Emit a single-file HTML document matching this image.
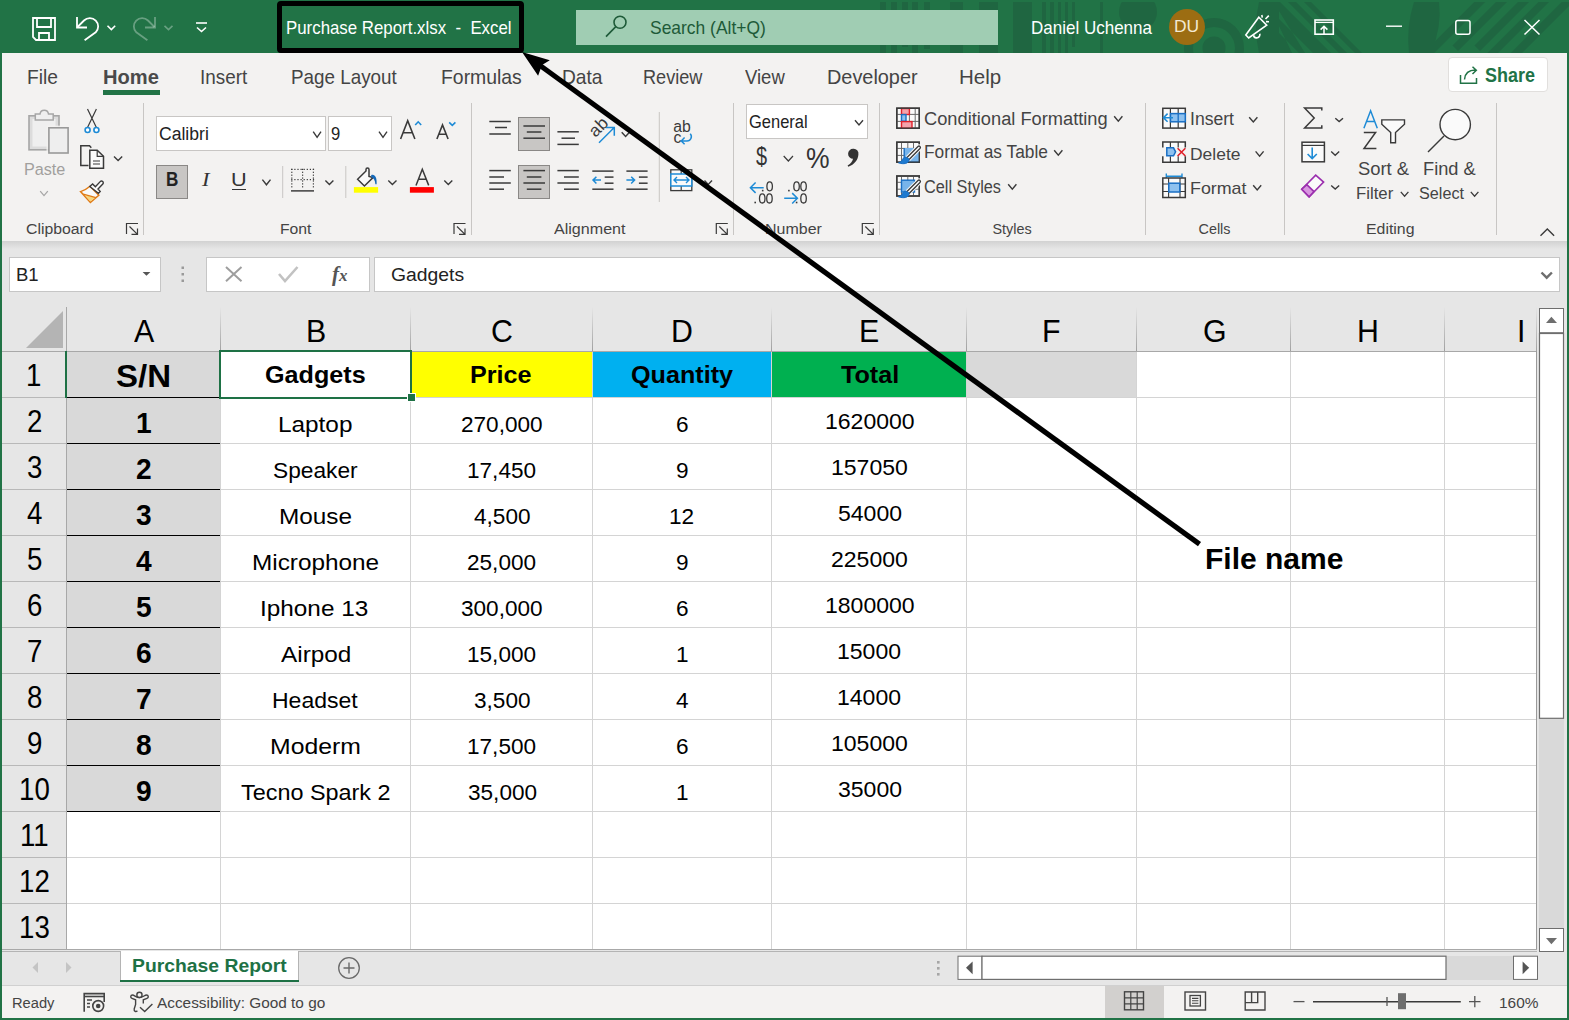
<!DOCTYPE html>
<html><head><meta charset="utf-8"><style>
html,body{margin:0;padding:0;width:1569px;height:1020px;overflow:hidden;background:#fff}
body{position:relative;font-family:'Liberation Sans', sans-serif}
div,svg,span{position:absolute}
.t{white-space:pre;line-height:1;transform-origin:0 0}
</style></head><body>
<div style="left:0px;top:0px;width:1569px;height:53px;background:#217346"></div>
<svg style="left:0;top:0" width="1569" height="53" viewBox="0 0 1569 53">
<defs><clipPath id="tb"><rect x="0" y="2" width="1569" height="51"/></clipPath></defs>
<g fill="#1f6641" clip-path="url(#tb)">
<rect x="880" y="2" width="6" height="51"/><rect x="891" y="2" width="6" height="51"/><rect x="902" y="2" width="6" height="45"/><rect x="912" y="2" width="6" height="51"/><rect x="924" y="2" width="6" height="47"/>
<rect x="950" y="2" width="13" height="51"/><rect x="979" y="2" width="19" height="51"/>
<rect x="1013" y="2" width="19" height="51"/>
<rect x="1042" y="2" width="4" height="51"/><rect x="1050" y="2" width="4" height="51"/><rect x="1058" y="2" width="3" height="51"/><rect x="1065" y="2" width="3" height="51"/><rect x="1072" y="2" width="3" height="45"/><rect x="1100" y="2" width="3" height="51"/>
<circle cx="1138" cy="12" r="19"/>
<path fill-rule="evenodd" d="M1184 48 A30 30 0 1 1 1244 48 A30 30 0 1 1 1184 48 Z M1193 48 A21 21 0 1 0 1235 48 A21 21 0 1 0 1193 48 Z"/>
<circle cx="1214" cy="48" r="11.5"/>
<path d="M1259 2 Q1253 27 1259 53 L1362 53 L1311 2 Z"/>
<path d="M1414 2 Q1406 27 1409 53 L1431 53 Q1442 27 1439 2 Z"/>
</g>
<g fill="#217346" clip-path="url(#tb)">
<path d="M1280 2 L1288 2 L1339 53 L1331 53 Z"/>
<path d="M1296 2 L1304 2 L1355 53 L1347 53 Z"/>
<path d="M1279 11 L1279 19 L1313 53 L1305 53 Z"/>
<path d="M1279 26 L1279 33 L1299 53 L1292 53 Z"/>
</g>
<g fill="#1f6641" clip-path="url(#tb)">
<path d="M1474.3 2 L1485.2 2 L1434.2 53 L1423.3 53 Z"/>
<path d="M1496 2 L1507 2 L1458 51 L1452.5 45.5 Z"/>
<path d="M1518 2 L1529 2 L1480 51 L1474.5 45.5 Z"/>
<path d="M1538.5 2 L1549 2 L1498 53 L1487.5 53 Z"/>
<path d="M1561.8 2 L1569 2 L1569 6 L1522 53 L1510.8 53 Z"/>
</g></svg>
<div style="left:277px;top:1px;width:237px;height:42px;border:5px solid #000;border-radius:4px"></div>
<div style="left:576px;top:10px;width:422px;height:35px;background:#a0cdb3"></div>
<div style="left:2px;top:53px;width:1565px;height:188px;background:#f3f2f1"></div>
<div style="left:2px;top:241px;width:1565px;height:710px;background:#e6e6e6"></div>
<div style="left:2px;top:241px;width:1565px;height:8px;background:linear-gradient(#d2d2d2,#e6e6e6)"></div>
<div style="left:143px;top:103px;width:1px;height:132px;background:#c8c6c4"></div>
<div style="left:471px;top:103px;width:1px;height:132px;background:#c8c6c4"></div>
<div style="left:733px;top:103px;width:1px;height:132px;background:#c8c6c4"></div>
<div style="left:879px;top:103px;width:1px;height:132px;background:#c8c6c4"></div>
<div style="left:1145px;top:103px;width:1px;height:132px;background:#c8c6c4"></div>
<div style="left:1284px;top:103px;width:1px;height:132px;background:#c8c6c4"></div>
<div style="left:1496px;top:103px;width:1px;height:132px;background:#c8c6c4"></div>
<div style="left:1448px;top:57px;width:98px;height:33px;background:#fff;border:1px solid #e1dfdd;border-radius:4px"></div>
<div style="left:156px;top:116px;width:168px;height:33px;background:#fff;border:1px solid #c8c6c4"></div>
<div style="left:328px;top:116px;width:62px;height:33px;background:#fff;border:1px solid #c8c6c4"></div>
<div style="left:746px;top:104px;width:120px;height:33px;background:#fff;border:1px solid #c8c6c4"></div>
<div style="left:9px;top:257px;width:150px;height:33px;background:#fff;border:1px solid #c6c6c6"></div>
<div style="left:206px;top:257px;width:162px;height:33px;background:#fff;border:1px solid #c6c6c6"></div>
<div style="left:374px;top:257px;width:1184px;height:33px;background:#fff;border:1px solid #c6c6c6"></div>
<div style="left:67px;top:352px;width:1469px;height:597px;background:#fff"></div>
<div style="left:66px;top:351px;width:154px;height:460px;background:#d9d9d9"></div>
<div style="left:410px;top:351px;width:182px;height:46px;background:#ffff00"></div>
<div style="left:592px;top:351px;width:179px;height:46px;background:#00b0f0"></div>
<div style="left:771px;top:351px;width:195px;height:46px;background:#00b050"></div>
<div style="left:966px;top:351px;width:170px;height:46px;background:#d9d9d9"></div>
<div style="left:66px;top:397px;width:1470px;height:1px;background:#d4d4d4"></div>
<div style="left:66px;top:443px;width:1470px;height:1px;background:#d4d4d4"></div>
<div style="left:66px;top:489px;width:1470px;height:1px;background:#d4d4d4"></div>
<div style="left:66px;top:535px;width:1470px;height:1px;background:#d4d4d4"></div>
<div style="left:66px;top:581px;width:1470px;height:1px;background:#d4d4d4"></div>
<div style="left:66px;top:627px;width:1470px;height:1px;background:#d4d4d4"></div>
<div style="left:66px;top:673px;width:1470px;height:1px;background:#d4d4d4"></div>
<div style="left:66px;top:719px;width:1470px;height:1px;background:#d4d4d4"></div>
<div style="left:66px;top:765px;width:1470px;height:1px;background:#d4d4d4"></div>
<div style="left:66px;top:811px;width:1470px;height:1px;background:#d4d4d4"></div>
<div style="left:66px;top:857px;width:1470px;height:1px;background:#d4d4d4"></div>
<div style="left:66px;top:903px;width:1470px;height:1px;background:#d4d4d4"></div>
<div style="left:66px;top:949px;width:1470px;height:1px;background:#d4d4d4"></div>
<div style="left:220px;top:351px;width:1px;height:598px;background:#d4d4d4"></div>
<div style="left:410px;top:351px;width:1px;height:598px;background:#d4d4d4"></div>
<div style="left:592px;top:351px;width:1px;height:598px;background:#d4d4d4"></div>
<div style="left:771px;top:351px;width:1px;height:598px;background:#d4d4d4"></div>
<div style="left:966px;top:351px;width:1px;height:598px;background:#d4d4d4"></div>
<div style="left:1136px;top:351px;width:1px;height:598px;background:#d4d4d4"></div>
<div style="left:1290px;top:351px;width:1px;height:598px;background:#d4d4d4"></div>
<div style="left:1444px;top:351px;width:1px;height:598px;background:#d4d4d4"></div>
<div style="left:66px;top:397px;width:154px;height:1px;background:#000"></div>
<div style="left:66px;top:443px;width:154px;height:1px;background:#000"></div>
<div style="left:66px;top:489px;width:154px;height:1px;background:#000"></div>
<div style="left:66px;top:535px;width:154px;height:1px;background:#000"></div>
<div style="left:66px;top:581px;width:154px;height:1px;background:#000"></div>
<div style="left:66px;top:627px;width:154px;height:1px;background:#000"></div>
<div style="left:66px;top:673px;width:154px;height:1px;background:#000"></div>
<div style="left:66px;top:719px;width:154px;height:1px;background:#000"></div>
<div style="left:66px;top:765px;width:154px;height:1px;background:#000"></div>
<div style="left:66px;top:811px;width:154px;height:1px;background:#000"></div>
<div style="left:67px;top:352px;width:153px;height:458px;background:transparent"></div>
<div style="left:220px;top:307px;width:1px;height:44px;background:linear-gradient(#e6e6e6,#a0a0a0)"></div>
<div style="left:410px;top:307px;width:1px;height:44px;background:linear-gradient(#e6e6e6,#a0a0a0)"></div>
<div style="left:592px;top:307px;width:1px;height:44px;background:linear-gradient(#e6e6e6,#a0a0a0)"></div>
<div style="left:771px;top:307px;width:1px;height:44px;background:linear-gradient(#e6e6e6,#a0a0a0)"></div>
<div style="left:966px;top:307px;width:1px;height:44px;background:linear-gradient(#e6e6e6,#a0a0a0)"></div>
<div style="left:1136px;top:307px;width:1px;height:44px;background:linear-gradient(#e6e6e6,#a0a0a0)"></div>
<div style="left:1290px;top:307px;width:1px;height:44px;background:linear-gradient(#e6e6e6,#a0a0a0)"></div>
<div style="left:1444px;top:307px;width:1px;height:44px;background:linear-gradient(#e6e6e6,#a0a0a0)"></div>
<div style="left:1536px;top:307px;width:1px;height:44px;background:linear-gradient(#e6e6e6,#a0a0a0)"></div>
<div style="left:2px;top:351px;width:1535px;height:1px;background:#a8a8a8"></div>
<div style="left:2px;top:397px;width:64px;height:1px;background:#b8b8b8"></div>
<div style="left:2px;top:443px;width:64px;height:1px;background:#b8b8b8"></div>
<div style="left:2px;top:489px;width:64px;height:1px;background:#b8b8b8"></div>
<div style="left:2px;top:535px;width:64px;height:1px;background:#b8b8b8"></div>
<div style="left:2px;top:581px;width:64px;height:1px;background:#b8b8b8"></div>
<div style="left:2px;top:627px;width:64px;height:1px;background:#b8b8b8"></div>
<div style="left:2px;top:673px;width:64px;height:1px;background:#b8b8b8"></div>
<div style="left:2px;top:719px;width:64px;height:1px;background:#b8b8b8"></div>
<div style="left:2px;top:765px;width:64px;height:1px;background:#b8b8b8"></div>
<div style="left:2px;top:811px;width:64px;height:1px;background:#b8b8b8"></div>
<div style="left:2px;top:857px;width:64px;height:1px;background:#b8b8b8"></div>
<div style="left:2px;top:903px;width:64px;height:1px;background:#b8b8b8"></div>
<div style="left:2px;top:949px;width:64px;height:1px;background:#b8b8b8"></div>
<div style="left:66px;top:307px;width:1px;height:642px;background:#a8a8a8"></div>
<div style="left:1536px;top:351px;width:1px;height:599px;background:#9a9a9a"></div>
<div style="left:2px;top:949px;width:1535px;height:1px;background:#a8a8a8"></div>
<svg style="left:26px;top:311px;" width="38" height="38" viewBox="0 0 38 38"><path d="M37 0 L37 37 L0 37 Z" fill="#b4b4b4"/></svg>
<div style="left:219px;top:350px;width:189px;height:45px;border:2px solid #1e7145"></div>
<div style="left:407px;top:393px;width:7px;height:7px;background:#1e7145;border:1px solid #fff"></div>
<div style="left:65px;top:351px;width:2px;height:47px;background:#1e7145"></div>
<div style="left:1537px;top:307px;width:30px;height:645px;background:#e6e6e6"></div>
<div style="left:1539px;top:718px;width:25px;height:211px;background:#d9d9d9"></div>
<div style="left:2px;top:950px;width:1565px;height:35px;background:#e6e6e6"></div>
<div style="left:2px;top:951px;width:118px;height:1px;background:#b4b4b4"></div>
<div style="left:299px;top:951px;width:1238px;height:1px;background:#b4b4b4"></div>
<div style="left:120px;top:951px;width:179px;height:31px;background:#fff;border-left:1px solid #b4b4b4;border-right:1px solid #b4b4b4;box-sizing:border-box"></div>
<div style="left:120px;top:980px;width:179px;height:2px;background:#1e7145"></div>
<div style="left:2px;top:985px;width:1565px;height:33px;background:#f3f2f1"></div>
<div style="left:2px;top:985px;width:1565px;height:1px;background:#d0d0d0"></div>
<div style="left:1105px;top:986px;width:59px;height:32px;background:#d2d0ce"></div>
<div style="left:1446px;top:956px;width:68px;height:24px;background:#d9d9d9"></div>
<div style="left:0px;top:53px;width:2px;height:967px;background:#217346"></div>
<div style="left:1567px;top:53px;width:2px;height:967px;background:#217346"></div>
<div style="left:0px;top:1018px;width:1569px;height:2px;background:#217346"></div>
<svg style="left:0;top:0" width="1569" height="1020" viewBox="0 0 1569 1020"><path d="M33 18 H55 V40 H36 L33 37 Z" stroke="#ffffff" stroke-width="1.8" fill="none" /><path d="M37 18 V27 H51 V18" stroke="#ffffff" stroke-width="1.8" fill="none" /><path d="M39 40 V33 H49 V40" stroke="#ffffff" stroke-width="1.8" fill="none" /><path d="M77 17 V27.5 H87" stroke="#ffffff" stroke-width="1.8" fill="none" /><path d="M77.5 27 L84 20.5 A8.3 8.3 0 0 1 95.7 32.3 L84.6 40.3" stroke="#ffffff" stroke-width="1.8" fill="none" /><path d="M107.5 25.8 L111.35 29.6 L115.2 25.8" stroke="#ffffff" stroke-width="1.6" fill="none" /><path d="M155 17 V27.5 H145" stroke="rgba(255,255,255,0.32)" stroke-width="1.8" fill="none" /><path d="M154.5 27 L148 20.5 A8.3 8.3 0 0 0 136.3 32.3 L147.4 40.3" stroke="rgba(255,255,255,0.32)" stroke-width="1.8" fill="none" /><path d="M164.5 25.8 L168.5 29.6 L172.5 25.8" stroke="rgba(255,255,255,0.32)" stroke-width="1.6" fill="none" /><path d="M196 23 H207" stroke="#ffffff" stroke-width="1.6" fill="none" /><path d="M197 27.5 L201.5 31.5 L206 27.5" stroke="#ffffff" stroke-width="1.6" fill="none" /><circle cx="620" cy="22.2" r="6" stroke="#1e5a38" stroke-width="1.6" fill="none" /><path d="M615.8 26.6 L606 36.6" stroke="#1e5a38" stroke-width="1.6" fill="none" /><path d="M1245.8 35 L1258.8 17.3 L1266.7 25.2 L1248.7 38 Z" stroke="#ffffff" stroke-width="1.6" fill="none" /><path d="M1253.5 35.3 A3.2 3.2 0 0 0 1259.8 33.8" stroke="#ffffff" stroke-width="1.6" fill="none" /><path d="M1261.8 15 L1262.3 17.6 M1265.5 19 L1268.8 15.6 M1266 21.6 L1269 21.7" stroke="#ffffff" stroke-width="1.6" fill="none" /><rect x="1315" y="20" width="18.3" height="14.2" stroke="#ffffff" stroke-width="1.6" fill="none" /><path d="M1315 22.4 H1333.3" stroke="#ffffff" stroke-width="1.3" fill="none" /><path d="M1324 34 V26.5 M1320.6 29.6 L1324 26.2 L1327.4 29.6" stroke="#ffffff" stroke-width="1.5" fill="none" /><path d="M1386 26.2 H1402" stroke="#ffffff" stroke-width="1.4" fill="none" /><rect x="1455.8" y="20.5" width="14.2" height="13.8" stroke="#ffffff" stroke-width="1.5" fill="none" rx="2"/><path d="M1524.5 20 L1539.5 34.5 M1539.5 20 L1524.5 34.5" stroke="#ffffff" stroke-width="1.5" fill="none" /><rect x="29" y="115.8" width="30" height="34" stroke="#a6a6a6" stroke-width="1.6" fill="#dcdcdc" /><rect x="32.5" y="119" width="23" height="27.5" stroke="none" stroke-width="0" fill="#efefef" /><path d="M35.3 120 V114 H40 A4.3 4.3 0 0 1 48.5 114 H53.2 V120 Z" stroke="#a6a6a6" stroke-width="1.5" fill="#efefef" /><rect x="47.2" y="126.3" width="22.5" height="28.2" stroke="#f3f2f1" stroke-width="1.2" fill="none" /><rect x="48.9" y="127.8" width="19.2" height="25.2" stroke="#999999" stroke-width="1.6" fill="#eeeeee" /><path d="M40.2 191.2 L44.0 195.6 L47.8 191.2" stroke="#a6a6a6" stroke-width="1.3" fill="none" /><path d="M87.5 109 L96.4 127.5 M96.4 109 L87.5 127.5" stroke="#3a3a3a" stroke-width="1.2" fill="none" /><circle cx="87.6" cy="130" r="2.5" stroke="#1e8bd6" stroke-width="1.6" fill="#fff" /><circle cx="96.4" cy="130" r="2.5" stroke="#1e8bd6" stroke-width="1.6" fill="#fff" /><path d="M88.5 165.5 H80.8 V145.8 H89.5 L91.3 147.8" stroke="#3a3a3a" stroke-width="1.5" fill="none" /><path d="M89.8 150.2 H97.2 L103.5 156.3 V168.3 H89.8 Z" stroke="#3a3a3a" stroke-width="1.5" fill="#fafafa" /><path d="M97.2 150.2 V156.3 H103.5" stroke="#3a3a3a" stroke-width="1.2" fill="none" /><path d="M93 161 H100 M93 164 H100" stroke="#3a3a3a" stroke-width="1" fill="none" /><path d="M114 156.6 L118.1 160.5 L122.2 156.6" stroke="#3a3a3a" stroke-width="1.4" fill="none" /><path d="M90 186.3 Q85.5 190.2 80.6 191.6 L90.4 202.4 L98.8 195.3 Z" stroke="#e07b16" stroke-width="1.5" fill="#fafafa" /><path d="M84.5 195 L95.6 197.6 L90.4 201.6 Z" stroke="none" stroke-width="0" fill="#f6d67e" /><path d="M83.2 194.1 L96 197.6" stroke="#e07b16" stroke-width="1.3" fill="none" /><path d="M89.8 186.5 L92.6 183.9 L95.4 186.8 L100.2 181.6 A1.7 1.7 0 0 1 102.8 184 L98 189 L100.2 191.4 L98.4 193.4 Z" stroke="#3a3a3a" stroke-width="1.4" fill="#fafafa" /><path d="M313.2 131.6 L317.1 137.3 L321 131.6" stroke="#3a3a3a" stroke-width="1.4" fill="none" /><path d="M379 131.6 L383.0 137.3 L387 131.6" stroke="#3a3a3a" stroke-width="1.4" fill="none" /><path d="M400.6 139 L407.7 120.8 L414.9 139 M403 132.8 H412.4" stroke="#3a3a3a" stroke-width="1.6" fill="none" /><path d="M415.2 125 L418.2 121.8 L421.2 125" stroke="#1e8bd6" stroke-width="1.6" fill="none" /><path d="M436.9 139 L442.5 125 L448.1 139 M438.9 134.3 H446.1" stroke="#3a3a3a" stroke-width="1.6" fill="none" /><path d="M449.2 122.4 L452.3 125.4 L455.4 122.4" stroke="#1e8bd6" stroke-width="1.6" fill="none" /><rect x="156.5" y="165.5" width="31" height="33" stroke="#8a8886" stroke-width="1" fill="#c8c6c4" /><path d="M262.4 179.6 L266.45 184.8 L270.5 179.6" stroke="#3a3a3a" stroke-width="1.4" fill="none" /><path d="M282.7 166 V198" stroke="#c8c6c4" stroke-width="1" fill="none" /><g fill="#3a3a3a"><rect x="291.2" y="168.8" width="1.2" height="1.2"/><rect x="291.2" y="179" width="1.2" height="1.2"/><rect x="294.3" y="168.8" width="1.2" height="1.2"/><rect x="294.3" y="179" width="1.2" height="1.2"/><rect x="297.4" y="168.8" width="1.2" height="1.2"/><rect x="297.4" y="179" width="1.2" height="1.2"/><rect x="300.5" y="168.8" width="1.2" height="1.2"/><rect x="300.5" y="179" width="1.2" height="1.2"/><rect x="303.6" y="168.8" width="1.2" height="1.2"/><rect x="303.6" y="179" width="1.2" height="1.2"/><rect x="306.7" y="168.8" width="1.2" height="1.2"/><rect x="306.7" y="179" width="1.2" height="1.2"/><rect x="309.8" y="168.8" width="1.2" height="1.2"/><rect x="309.8" y="179" width="1.2" height="1.2"/><rect x="312.9" y="168.8" width="1.2" height="1.2"/><rect x="312.9" y="179" width="1.2" height="1.2"/><rect x="291.2" y="168.8" width="1.2" height="1.2"/><rect x="302" y="168.8" width="1.2" height="1.2"/><rect x="312.8" y="168.8" width="1.2" height="1.2"/><rect x="291.2" y="171.7" width="1.2" height="1.2"/><rect x="302" y="171.7" width="1.2" height="1.2"/><rect x="312.8" y="171.7" width="1.2" height="1.2"/><rect x="291.2" y="174.6" width="1.2" height="1.2"/><rect x="302" y="174.6" width="1.2" height="1.2"/><rect x="312.8" y="174.6" width="1.2" height="1.2"/><rect x="291.2" y="177.5" width="1.2" height="1.2"/><rect x="302" y="177.5" width="1.2" height="1.2"/><rect x="312.8" y="177.5" width="1.2" height="1.2"/><rect x="291.2" y="180.4" width="1.2" height="1.2"/><rect x="302" y="180.4" width="1.2" height="1.2"/><rect x="312.8" y="180.4" width="1.2" height="1.2"/><rect x="291.2" y="183.3" width="1.2" height="1.2"/><rect x="302" y="183.3" width="1.2" height="1.2"/><rect x="312.8" y="183.3" width="1.2" height="1.2"/><rect x="291.2" y="186.2" width="1.2" height="1.2"/><rect x="302" y="186.2" width="1.2" height="1.2"/><rect x="312.8" y="186.2" width="1.2" height="1.2"/></g><path d="M291 190.9 H314" stroke="#222" stroke-width="1.3" fill="none" /><path d="M325.4 180.5 L329.4 184.5 L333.4 180.5" stroke="#3a3a3a" stroke-width="1.4" fill="none" /><path d="M345.8 166 V198" stroke="#c8c6c4" stroke-width="1" fill="none" /><path d="M357.6 179.3 L366 171 V169.5 A1.5 1.5 0 0 1 369 169.5 V176.5 L373 177.6 L364.4 186 Z" stroke="#3a3a3a" stroke-width="1.5" fill="#fafafa" /><path d="M371.2 175 C374.5 173.5 377.2 177 376.6 184.2 L375.4 184.2 C375 180 373.8 177.8 371.2 177.2 Z" stroke="none" stroke-width="0" fill="#1468b8" /><rect x="353.9" y="187.1" width="24.2" height="5.6" stroke="none" stroke-width="0" fill="#ffff00" /><path d="M388.3 180.5 L392.4 184.5 L396.5 180.5" stroke="#3a3a3a" stroke-width="1.4" fill="none" /><path d="M416 185.4 L422.3 169.3 L428.7 185.4 M418.3 179.2 H426.3" stroke="#3a3a3a" stroke-width="1.5" fill="none" /><rect x="409.9" y="187.1" width="24" height="5.6" stroke="none" stroke-width="0" fill="#ff0000" /><path d="M444.3 180.5 L448.3 184.5 L452.3 180.5" stroke="#3a3a3a" stroke-width="1.4" fill="none" /><path d="M489.3 121.5 H510.8" stroke="#3a3a3a" stroke-width="1.5" fill="none" /><path d="M495 127.5 H507" stroke="#3a3a3a" stroke-width="1.5" fill="none" /><path d="M489.3 134 H510.8" stroke="#3a3a3a" stroke-width="1.5" fill="none" /><rect x="518.5" y="117.5" width="31" height="33" stroke="#8a8886" stroke-width="1" fill="#c8c6c4" /><path d="M523.4 126 H545" stroke="#3a3a3a" stroke-width="1.5" fill="none" /><path d="M526.8 132 H541.4" stroke="#3a3a3a" stroke-width="1.5" fill="none" /><path d="M523.4 138.2 H545" stroke="#3a3a3a" stroke-width="1.5" fill="none" /><path d="M557.4 131.8 H578.8" stroke="#3a3a3a" stroke-width="1.5" fill="none" /><path d="M561.5 138.2 H575" stroke="#3a3a3a" stroke-width="1.5" fill="none" /><path d="M557.4 144.4 H578.8" stroke="#3a3a3a" stroke-width="1.5" fill="none" /><text x="0" y="0" font-family="Liberation Sans" font-size="17.5" fill="#3a3a3a" transform="translate(595.5,138) rotate(-45)">ab</text><path d="M599 142.8 L614 127.8 M606 127.6 H614.3 V135.8" stroke="#1e8bd6" stroke-width="1.5" fill="none" /><path d="M621.7 132.2 L625.6 136.5 L629.5 132.2" stroke="#3a3a3a" stroke-width="1.4" fill="none" /><path d="M659.3 112 V202" stroke="#c8c6c4" stroke-width="1" fill="none" /><text x="673.2" y="132.2" font-family="Liberation Sans" font-size="15.8" font-weight="400" fill="#3a3a3a" text-anchor="start" >ab</text><text x="673.5" y="143.2" font-family="Liberation Sans" font-size="15.8" font-weight="400" fill="#3a3a3a" text-anchor="start" >c</text><path d="M690.2 133.8 A4.3 4.3 0 0 1 687 141 H681.5 M684.6 137.6 L681.3 141 L684.6 144.3" stroke="#1e8bd6" stroke-width="1.5" fill="none" /><path d="M489.3 170.6 H510.8" stroke="#3a3a3a" stroke-width="1.5" fill="none" /><path d="M489.3 177 H504" stroke="#3a3a3a" stroke-width="1.5" fill="none" /><path d="M489.3 183 H510.8" stroke="#3a3a3a" stroke-width="1.5" fill="none" /><path d="M489.3 189.2 H504" stroke="#3a3a3a" stroke-width="1.5" fill="none" /><rect x="518.5" y="165.5" width="31" height="33" stroke="#8a8886" stroke-width="1" fill="#c8c6c4" /><path d="M523.4 170.6 H545" stroke="#3a3a3a" stroke-width="1.5" fill="none" /><path d="M526.8 177 H541.4" stroke="#3a3a3a" stroke-width="1.5" fill="none" /><path d="M523.4 183 H545" stroke="#3a3a3a" stroke-width="1.5" fill="none" /><path d="M526.8 189.2 H541.4" stroke="#3a3a3a" stroke-width="1.5" fill="none" /><path d="M557.4 170.6 H578.8" stroke="#3a3a3a" stroke-width="1.5" fill="none" /><path d="M564 177 H578.8" stroke="#3a3a3a" stroke-width="1.5" fill="none" /><path d="M557.4 183 H578.8" stroke="#3a3a3a" stroke-width="1.5" fill="none" /><path d="M564 189.2 H578.8" stroke="#3a3a3a" stroke-width="1.5" fill="none" /><path d="M592.3 171.1 H613.5" stroke="#3a3a3a" stroke-width="1.5" fill="none" /><path d="M604.7 177.1 H613.5" stroke="#3a3a3a" stroke-width="1.5" fill="none" /><path d="M604.7 183.2 H613.5" stroke="#3a3a3a" stroke-width="1.5" fill="none" /><path d="M592.3 189.2 H613.5" stroke="#3a3a3a" stroke-width="1.5" fill="none" /><path d="M601 180.1 H593 M596.4 176.7 L593 180.1 L596.4 183.5" stroke="#1e8bd6" stroke-width="1.5" fill="none" /><path d="M626.4 171.1 H647.6" stroke="#3a3a3a" stroke-width="1.5" fill="none" /><path d="M638.9 177.1 H647.6" stroke="#3a3a3a" stroke-width="1.5" fill="none" /><path d="M638.9 183.2 H647.6" stroke="#3a3a3a" stroke-width="1.5" fill="none" /><path d="M626.4 189.2 H647.6" stroke="#3a3a3a" stroke-width="1.5" fill="none" /><path d="M626.4 180.1 H634.6 M631.2 176.7 L634.6 180.1 L631.2 183.5" stroke="#1e8bd6" stroke-width="1.5" fill="none" /><rect x="670.8" y="169.8" width="21" height="20.8" stroke="#3a3a3a" stroke-width="1.3" fill="#fafafa" /><path d="M681.2 170 V190.5" stroke="#3a3a3a" stroke-width="1.2" fill="none" /><rect x="670.8" y="174" width="21" height="12" stroke="#1e8bd6" stroke-width="1.5" fill="#fafafa" /><path d="M674 180 H689 M677 177 L674 180 L677 183 M686 177 L689 180 L686 183" stroke="#1e8bd6" stroke-width="1.4" fill="none" /><path d="M704.5 180.5 L708.25 184.5 L712 180.5" stroke="#3a3a3a" stroke-width="1.4" fill="none" /><path d="M855 120.2 L859.0 125 L863 120.2" stroke="#3a3a3a" stroke-width="1.4" fill="none" /><path d="M783.7 156 L788.35 161 L793 156" stroke="#3a3a3a" stroke-width="1.2" fill="none" /><ellipse cx="769.65" cy="186.35" rx="2.75" ry="4.55" stroke="#3a3a3a" stroke-width="1.3" fill="none"/><rect x="761.9000000000001" y="189.79999999999998" width="1.6" height="1.6" stroke="none" stroke-width="0" fill="#3a3a3a" /><ellipse cx="762.25" cy="198.45000000000002" rx="2.75" ry="4.55" stroke="#3a3a3a" stroke-width="1.3" fill="none"/><ellipse cx="769.45" cy="198.45000000000002" rx="2.75" ry="4.55" stroke="#3a3a3a" stroke-width="1.3" fill="none"/><rect x="754.4000000000001" y="201.7" width="1.6" height="1.6" stroke="none" stroke-width="0" fill="#3a3a3a" /><path d="M763.7 187.7 H750.6 M755.6 182.5 L750.4 187.7 L755.6 192.9" stroke="#1e8bd6" stroke-width="1.5" fill="none" /><ellipse cx="796.5500000000001" cy="186.35" rx="2.75" ry="4.55" stroke="#3a3a3a" stroke-width="1.3" fill="none"/><ellipse cx="803.5500000000001" cy="186.35" rx="2.75" ry="4.55" stroke="#3a3a3a" stroke-width="1.3" fill="none"/><rect x="788.1" y="189.79999999999998" width="1.6" height="1.6" stroke="none" stroke-width="0" fill="#3a3a3a" /><ellipse cx="803.5500000000001" cy="198.45000000000002" rx="2.75" ry="4.55" stroke="#3a3a3a" stroke-width="1.3" fill="none"/><rect x="795.8000000000001" y="201.7" width="1.6" height="1.6" stroke="none" stroke-width="0" fill="#3a3a3a" /><path d="M784.2 198.3 H797 M792.2 193.1 L797.4 198.3 L792.2 203.5" stroke="#1e8bd6" stroke-width="1.5" fill="none" /><rect x="896.8" y="108.2" width="22.5" height="20" stroke="#3a3a3a" stroke-width="1.4" fill="#fafafa" /><path d="M901.5 108.2 V128.2" stroke="#6a6a6a" stroke-width="1" fill="none" /><path d="M909.4 108.2 V128.2" stroke="#6a6a6a" stroke-width="1" fill="none" /><path d="M915.2 108.2 V128.2" stroke="#6a6a6a" stroke-width="1" fill="none" /><path d="M896.8 114.4 H919.3" stroke="#6a6a6a" stroke-width="1" fill="none" /><path d="M896.8 121.4 H919.3" stroke="#6a6a6a" stroke-width="1" fill="none" /><rect x="901.5" y="108.5" width="7.9" height="6" stroke="#e0202a" stroke-width="1.4" fill="#f4a3ab" /><rect x="901.5" y="114.6" width="4.5" height="6.6" stroke="#1a6fc4" stroke-width="1.4" fill="#8ec1ef" /><rect x="901.5" y="121.6" width="10.5" height="6.6" stroke="#e0202a" stroke-width="1.4" fill="#f4a3ab" /><rect x="896.8" y="108.2" width="22.5" height="20" stroke="#3a3a3a" stroke-width="1.4" fill="none" /><path d="M1114.2 116.2 L1118.3000000000002 121.2 L1122.4 116.2" stroke="#3a3a3a" stroke-width="1.4" fill="none" /><rect x="896.8" y="142.2" width="22.5" height="20" stroke="#3a3a3a" stroke-width="1.4" fill="#fafafa" /><path d="M901.5 142.2 V162.2" stroke="#6a6a6a" stroke-width="1" fill="none" /><path d="M907.8 142.2 V162.2" stroke="#6a6a6a" stroke-width="1" fill="none" /><path d="M913.5 142.2 V162.2" stroke="#6a6a6a" stroke-width="1" fill="none" /><path d="M896.8 148.4 H919.3" stroke="#6a6a6a" stroke-width="1" fill="none" /><path d="M896.8 155.4 H919.3" stroke="#6a6a6a" stroke-width="1" fill="none" /><path d="M904.2 148 H919.3 V162.2 H904.2 Z" stroke="none" stroke-width="0" fill="#78b4ea" /><path d="M904.2 148 V162.2 H919.3" stroke="#1a6fc4" stroke-width="1.4" fill="none" /><rect x="896.8" y="142.2" width="22.5" height="20" stroke="#3a3a3a" stroke-width="1.4" fill="none" /><path d="M906.5 158 L918 146.5 A1.4 1.4 0 0 1 920 148.5 L908.6 160" stroke="#fafafa" stroke-width="3.2" fill="none" /><path d="M906.5 158 L918 146.5 A1.4 1.4 0 0 1 920 148.5 L908.6 160" stroke="#3a3a3a" stroke-width="1.3" fill="#fafafa" /><path d="M906 157 C902 157 903 162 898.5 162.8 C903 164.5 909.5 164 909 159 Z" stroke="#1a6fc4" stroke-width="1" fill="#1e7ad0" /><path d="M1054.2 150.2 L1058.3000000000002 155.2 L1062.4 150.2" stroke="#3a3a3a" stroke-width="1.4" fill="none" /><rect x="896.8" y="176" width="22.5" height="20" stroke="#3a3a3a" stroke-width="1.4" fill="#fafafa" /><path d="M901.5 176 V196" stroke="#6a6a6a" stroke-width="1" fill="none" /><path d="M907.8 176 V196" stroke="#6a6a6a" stroke-width="1" fill="none" /><path d="M913.5 176 V196" stroke="#6a6a6a" stroke-width="1" fill="none" /><path d="M896.8 182.3 H919.3" stroke="#6a6a6a" stroke-width="1" fill="none" /><path d="M896.8 189.2 H919.3" stroke="#6a6a6a" stroke-width="1" fill="none" /><rect x="901.5" y="180.2" width="13" height="11.8" stroke="#1a6fc4" stroke-width="1.4" fill="#78b4ea" /><rect x="896.8" y="176" width="22.5" height="20" stroke="#3a3a3a" stroke-width="1.4" fill="none" /><path d="M906.5 192 L918 180.5 A1.4 1.4 0 0 1 920 182.5 L908.6 194" stroke="#fafafa" stroke-width="3.2" fill="none" /><path d="M906.5 192 L918 180.5 A1.4 1.4 0 0 1 920 182.5 L908.6 194" stroke="#3a3a3a" stroke-width="1.3" fill="#fafafa" /><path d="M906 191 C902 191 903 196 898.5 196.8 C903 198.5 909.5 198 909 193 Z" stroke="#1a6fc4" stroke-width="1" fill="#1e7ad0" /><path d="M1008.2 184.2 L1012.3 189.2 L1016.4 184.2" stroke="#3a3a3a" stroke-width="1.4" fill="none" /><rect x="1162.8" y="108.3" width="22.5" height="19.8" stroke="#3a3a3a" stroke-width="1.5" fill="#fafafa" /><path d="M1170.4 108.3 V128 M1178.2 108.3 V128" stroke="#3a3a3a" stroke-width="1.2" fill="none" /><rect x="1170.5" y="113.6" width="14.8" height="8.2" stroke="#1a6fc4" stroke-width="1.5" fill="#8ec1ef" /><path d="M1178.2 113.6 V121.8" stroke="#1a6fc4" stroke-width="1.3" fill="none" /><path d="M1173 117.7 H1163.5 M1167.6 113.6 L1163.5 117.7 L1167.6 121.8" stroke="#1e8bd6" stroke-width="1.6" fill="none" /><path d="M1249.2 117.2 L1253.3000000000002 122 L1257.4 117.2" stroke="#3a3a3a" stroke-width="1.4" fill="none" /><path d="M1162.8 147.4 V141.9 H1185.3 V147.4 M1162.8 156.2 V162.2 H1185.3 V156.2" stroke="#3a3a3a" stroke-width="1.5" fill="#fafafa" /><path d="M1170.4 142 V147.4 M1178.2 142 V147.4 M1170.4 156.2 V162 M1178.2 156.2 V162" stroke="#3a3a3a" stroke-width="1.2" fill="none" /><path d="M1166.8 147.8 H1173.5 L1175.6 151.8 L1173.5 155.8 H1166.8 Z" stroke="#1a6fc4" stroke-width="1.5" fill="#8ec1ef" /><path d="M1177.6 148.2 L1185.4 156 M1185.4 148.2 L1177.6 156" stroke="#e0202a" stroke-width="1.6" fill="none" /><path d="M1255.6 151.4 L1259.6 156.2 L1263.6 151.4" stroke="#3a3a3a" stroke-width="1.4" fill="none" /><path d="M1166.3 176.2 H1182 M1166.3 173.6 V178.8 M1182 173.6 V178.8" stroke="#1e8bd6" stroke-width="1.4" fill="none" /><rect x="1162.8" y="178" width="22.5" height="19.5" stroke="#3a3a3a" stroke-width="1.5" fill="#fafafa" /><path d="M1168.6 178 V197.5 M1180 178 V197.5 M1162.8 184 H1185.3 M1162.8 191.5 H1185.3" stroke="#3a3a3a" stroke-width="1.1" fill="none" /><rect x="1168.8" y="183.2" width="11" height="8.8" stroke="#1a6fc4" stroke-width="1.5" fill="#8ec1ef" /><path d="M1253.2 185.2 L1257.2 190 L1261.2 185.2" stroke="#3a3a3a" stroke-width="1.4" fill="none" /><path d="M1321.8 110.6 V108 H1304.6 L1314.2 118 L1304.6 128 H1321.8 V125.2" stroke="#3a3a3a" stroke-width="1.5" fill="none" /><path d="M1335.3 118.2 L1339.15 121.6 L1343 118.2" stroke="#3a3a3a" stroke-width="1.4" fill="none" /><rect x="1302" y="142.2" width="22.4" height="19.6" stroke="#3a3a3a" stroke-width="1.5" fill="#fafafa" /><path d="M1302 145.4 H1324.4" stroke="#3a3a3a" stroke-width="1.2" fill="none" /><path d="M1312.2 147.6 V158.4 M1307.6 154 L1312.2 158.6 L1316.8 154" stroke="#1e8bd6" stroke-width="1.6" fill="none" /><path d="M1331.2 151.6 L1335.2 155.2 L1339.2 151.6" stroke="#3a3a3a" stroke-width="1.4" fill="none" /><path d="M1301.8 189.2 L1315.7 175.2 L1323.6 182.1 L1309.1 196.8 Z" stroke="#9b2fae" stroke-width="1.6" fill="#fafafa" /><path d="M1301.8 189.2 L1306.8 184.6 L1314 191.6 L1309.1 196.8 Z" stroke="#9b2fae" stroke-width="1.6" fill="#d896e0" /><path d="M1331.2 185.4 L1335.2 189 L1339.2 185.4" stroke="#3a3a3a" stroke-width="1.4" fill="none" /><path d="M1363.9 128.2 L1370.6 110.8 L1377.3 128.2 M1366.4 121.4 H1374.8" stroke="#1e8bd6" stroke-width="1.5" fill="none" /><path d="M1363.8 132.4 H1375.6 L1364 148.6 H1376.4" stroke="#3a3a3a" stroke-width="1.5" fill="none" /><path d="M1381.8 119.9 H1404.5 V124.2 L1395.5 132.6 V142.7 H1390.7 V132.6 L1381.8 124.2 Z" stroke="#3a3a3a" stroke-width="1.4" fill="#fafafa" /><path d="M1400.8 191.8 L1404.6 196.2 L1408.4 191.8" stroke="#3a3a3a" stroke-width="1.3" fill="none" /><circle cx="1455.2" cy="124.6" r="15.2" stroke="#3a3a3a" stroke-width="1.4" fill="#fafafa" /><path d="M1444 136 L1428 152" stroke="#3a3a3a" stroke-width="1.4" fill="none" /><path d="M1470.8 191.8 L1474.6 196.2 L1478.4 191.8" stroke="#3a3a3a" stroke-width="1.3" fill="none" /><path d="M1540.5 235.8 L1547.3 229 L1554.1 235.8" stroke="#3a3a3a" stroke-width="1.4" fill="none" /><path d="M126.5 234 V223.5 H138.0 M129.5 226.5 L137.5 234.4 M137.5 228.5 V234.4 H131.5" stroke="#3a3a3a" stroke-width="1.2" fill="none" /><path d="M454 234 V223.5 H465.5 M457 226.5 L465 234.4 M465 228.5 V234.4 H459" stroke="#3a3a3a" stroke-width="1.2" fill="none" /><path d="M716.3 234 V223.5 H727.8 M719.3 226.5 L727.3 234.4 M727.3 228.5 V234.4 H721.3" stroke="#3a3a3a" stroke-width="1.2" fill="none" /><path d="M862.3 234 V223.5 H873.8 M865.3 226.5 L873.3 234.4 M873.3 228.5 V234.4 H867.3" stroke="#3a3a3a" stroke-width="1.2" fill="none" /><path d="M1460.5 75 V83.2 H1476.5 V78" stroke="#217346" stroke-width="1.5" fill="none" /><path d="M1464.5 79.5 C1465 73 1469 70 1475.5 70 M1472.5 66.8 L1476.3 70.3 L1472.5 74" stroke="#217346" stroke-width="1.5" fill="none" /><path d="M142.6 272 H150.4 L146.5 275.8 Z" stroke="none" stroke-width="0" fill="#555" /><rect x="181.5" y="266.5" width="2.5" height="2.5" stroke="none" stroke-width="0" fill="#9a9a9a" /><rect x="181.5" y="273" width="2.5" height="2.5" stroke="none" stroke-width="0" fill="#9a9a9a" /><rect x="181.5" y="279.5" width="2.5" height="2.5" stroke="none" stroke-width="0" fill="#9a9a9a" /><path d="M226 267 L241.5 281.2 M241.5 267 L226 281.2" stroke="#9e9e9e" stroke-width="2" fill="none" /><path d="M279 274 L285 281 L297.5 267" stroke="#c2c2c2" stroke-width="2.6" fill="none" /><text x="332" y="281" font-family="Liberation Serif" font-style="italic" font-weight="700" font-size="21" fill="#555">f<tspan font-size="17" dx="0">x</tspan></text><path d="M1541.5 272.5 L1546.7 277.7 L1551.9 272.5" stroke="#6e6e6e" stroke-width="2.4" fill="none" /><rect x="1539.5" y="308.5" width="24" height="24.2" stroke="#6e6e6e" stroke-width="1" fill="#fff" /><path d="M1546 323 L1551.4 316.8 L1557 323 Z" stroke="none" stroke-width="0" fill="#6e6e6e" /><rect x="1539.5" y="333.5" width="24" height="384.8" stroke="#6e6e6e" stroke-width="1.2" fill="#fff" /><rect x="1539.5" y="928.5" width="24" height="23" stroke="#6e6e6e" stroke-width="1" fill="#fff" /><path d="M1546 938 L1551.4 944.2 L1557 938 Z" stroke="none" stroke-width="0" fill="#6e6e6e" /><rect x="958" y="956.2" width="24" height="23.2" stroke="#6e6e6e" stroke-width="1" fill="#fff" /><path d="M972.6 961.6 L966 967.8 L972.6 974.2 Z" stroke="none" stroke-width="0" fill="#555" /><rect x="982" y="956.2" width="464" height="23.2" stroke="#6e6e6e" stroke-width="1.2" fill="#fff" /><rect x="1513.5" y="956.2" width="24" height="23.2" stroke="#6e6e6e" stroke-width="1" fill="#fff" /><path d="M1522.6 961.6 L1529.2 967.8 L1522.6 974.2 Z" stroke="none" stroke-width="0" fill="#555" /><rect x="937" y="961" width="2.6" height="2.6" stroke="none" stroke-width="0" fill="#a6a6a6" /><rect x="937" y="967" width="2.6" height="2.6" stroke="none" stroke-width="0" fill="#a6a6a6" /><rect x="937" y="973" width="2.6" height="2.6" stroke="none" stroke-width="0" fill="#a6a6a6" /><path d="M38 962 L32.5 967.5 L38 973 Z" stroke="none" stroke-width="0" fill="#c4c4c4" /><path d="M66 962 L71.5 967.5 L66 973 Z" stroke="none" stroke-width="0" fill="#c4c4c4" /><circle cx="349" cy="968" r="10.3" stroke="#6a6a6a" stroke-width="1.3" fill="none" /><path d="M343.5 968 H354.5 M349 962.5 V973.5" stroke="#6a6a6a" stroke-width="1.4" fill="none" /><path d="M84.2 1011.8 V993.6 H104.2 V1002" stroke="#444" stroke-width="1.6" fill="none" /><path d="M84.2 996.5 H104.2" stroke="#444" stroke-width="1.6" fill="none" /><path d="M87 1000 H92 M87 1003.5 H90 M87 1007 H90" stroke="#444" stroke-width="1.3" fill="none" /><circle cx="98.2" cy="1006" r="5.4" stroke="#444" stroke-width="1.6" fill="#f3f2f1" /><circle cx="98.2" cy="1006" r="2.3" stroke="none" stroke-width="0" fill="#444" /><circle cx="139.45" cy="994.9" r="2.6" stroke="#444" stroke-width="1.4" fill="none" /><path d="M139.45 997.6 C136 997.6 134.5 995 132.5 995 C130.5 995 130 997.5 132 998.3 L135.6 999.8 V1004.5 L134.2 1009 C133.8 1011.5 136 1012.2 137.4 1010.8" stroke="#444" stroke-width="1.4" fill="none" /><path d="M139.45 997.6 C143 997.6 144.5 995 146.5 995 C148.5 995 149 997.5 147 998.3 L143.3 999.8 V1003.6" stroke="#444" stroke-width="1.4" fill="none" /><path d="M140 1007.2 L144.7 1011.6 L152.4 1003.9" stroke="#444" stroke-width="1.4" fill="none" /><rect x="1124.5" y="991.8" width="19" height="18" stroke="#444" stroke-width="1.4" fill="none" /><path d="M1130.8 991.8 V1009.8 M1137.2 991.8 V1009.8 M1124.5 997.8 H1143.5 M1124.5 1003.8 H1143.5" stroke="#444" stroke-width="1.2" fill="none" /><rect x="1185" y="992" width="20.5" height="18" stroke="#444" stroke-width="1.4" fill="none" /><rect x="1190" y="995.5" width="10.4" height="10.5" stroke="#444" stroke-width="1.3" fill="none" /><path d="M1192 998.4 H1198.4 M1192 1000.8 H1198.4 M1192 1003.2 H1198.4" stroke="#444" stroke-width="1.1" fill="none" /><path d="M1245.2 1010 V992 H1265 V1010 Z M1245.2 1002.6 H1257.7 V992 M1251.6 992 V1002.6" stroke="#444" stroke-width="1.4" fill="none" /><path d="M1293.5 1001.6 H1304.5" stroke="#555" stroke-width="1.3" fill="none" /><path d="M1313 1001.8 H1460.8" stroke="#3a3a3a" stroke-width="1.6" fill="none" /><path d="M1387 997 V1006" stroke="#555" stroke-width="1.3" fill="none" /><rect x="1398" y="993.2" width="8" height="16" stroke="none" stroke-width="0" fill="#6e6e6e" /><path d="M1469 1001.6 H1480.5 M1474.8 996 V1007.2" stroke="#555" stroke-width="1.3" fill="none" /></svg>
<div style="left:1169px;top:9px;width:36px;height:36px;background:#9c6d12;border-radius:50%"></div>
<span class="t" style="left:286.07px;top:18.63px;font-size:18.16px;color:#ffffff;transform:scaleX(0.9276)">Purchase Report.xlsx  -  Excel</span>
<span class="t" style="left:650.00px;top:18.63px;font-size:18.16px;color:#1e5a38;transform:scaleX(0.9604)">Search (Alt+Q)</span>
<span class="t" style="left:1030.66px;top:18.63px;font-size:18.16px;color:#ffffff;transform:scaleX(0.9365)">Daniel Uchenna</span>
<span class="t" style="left:1173.96px;top:18.81px;font-size:16.76px;color:#f3e9d2;transform:scaleX(1.0409)">DU</span>
<span class="t" style="left:26.58px;top:66.88px;font-size:20.81px;color:#444;transform:scaleX(0.9235)">File</span>
<span class="t" style="left:102.73px;top:66.88px;font-size:20.81px;color:#4a4a4a;font-weight:700;transform:scaleX(0.9659)">Home</span>
<span class="t" style="left:199.59px;top:66.88px;font-size:20.81px;color:#444;transform:scaleX(0.9076)">Insert</span>
<span class="t" style="left:291.09px;top:66.88px;font-size:20.81px;color:#444;transform:scaleX(0.9051)">Page Layout</span>
<span class="t" style="left:440.57px;top:66.88px;font-size:20.81px;color:#444;transform:scaleX(0.9323)">Formulas</span>
<span class="t" style="left:562.08px;top:66.88px;font-size:20.81px;color:#444;transform:scaleX(0.9224)">Data</span>
<span class="t" style="left:642.73px;top:66.88px;font-size:20.81px;color:#444;transform:scaleX(0.8713)">Review</span>
<span class="t" style="left:745.40px;top:66.88px;font-size:20.81px;color:#444;transform:scaleX(0.8888)">View</span>
<span class="t" style="left:827.04px;top:66.88px;font-size:20.81px;color:#444;transform:scaleX(0.9556)">Developer</span>
<span class="t" style="left:959.01px;top:66.88px;font-size:20.81px;color:#444;transform:scaleX(0.9853)">Help</span>
<div style="left:103px;top:90px;width:57px;height:5px;background:#217346"></div>
<span class="t" style="left:1484.50px;top:65.30px;font-size:20.67px;color:#217346;font-weight:700;transform:scaleX(0.8696)">Share</span>
<span class="t" style="left:26.30px;top:222.42px;font-size:14.39px;color:#444;transform:scaleX(1.0986)">Clipboard</span>
<span class="t" style="left:279.51px;top:222.42px;font-size:14.39px;color:#444;transform:scaleX(1.0947)">Font</span>
<span class="t" style="left:554.30px;top:222.42px;font-size:14.39px;color:#444;transform:scaleX(1.1184)">Alignment</span>
<span class="t" style="left:764.89px;top:222.42px;font-size:14.39px;color:#444;transform:scaleX(1.1124)">Number</span>
<span class="t" style="left:992.50px;top:222.42px;font-size:14.39px;color:#444">Styles</span>
<span class="t" style="left:1198.50px;top:222.42px;font-size:14.39px;color:#444">Cells</span>
<span class="t" style="left:1365.50px;top:222.42px;font-size:14.39px;color:#444;transform:scaleX(1.1034)">Editing</span>
<span class="t" style="left:24.04px;top:162.49px;font-size:16.90px;color:#a19f9d;transform:scaleX(0.9577)">Paste</span>
<span class="t" style="left:159.30px;top:125.39px;font-size:18.44px;color:#222;transform:scaleX(0.9528)">Calibri</span>
<span class="t" style="left:331.00px;top:125.39px;font-size:18.44px;color:#222;transform:scaleX(0.9000)">9</span>
<span class="t" style="left:749.40px;top:113.19px;font-size:18.44px;color:#222;transform:scaleX(0.8938)">General</span>
<span class="t" style="left:924.30px;top:110.57px;font-size:17.88px;color:#444;transform:scaleX(1.0221)">Conditional Formatting</span>
<span class="t" style="left:923.63px;top:144.47px;font-size:17.88px;color:#444;transform:scaleX(0.9700)">Format as Table</span>
<span class="t" style="left:924.30px;top:178.68px;font-size:17.81px;color:#444;transform:scaleX(0.9160)">Cell Styles</span>
<span class="t" style="left:1189.69px;top:111.12px;font-size:17.46px;color:#444;transform:scaleX(1.0078)">Insert</span>
<span class="t" style="left:1189.63px;top:145.87px;font-size:16.34px;color:#444;transform:scaleX(1.0690)">Delete</span>
<span class="t" style="left:1189.61px;top:179.67px;font-size:16.34px;color:#444;transform:scaleX(1.0923)">Format</span>
<span class="t" style="left:1358.30px;top:161.22px;font-size:17.46px;color:#444;transform:scaleX(1.0548)">Sort &amp;</span>
<span class="t" style="left:1356.00px;top:185.81px;font-size:16.76px;color:#444">Filter</span>
<span class="t" style="left:1422.56px;top:161.22px;font-size:17.46px;color:#444;transform:scaleX(1.0449)">Find &amp;</span>
<span class="t" style="left:1418.50px;top:185.81px;font-size:16.76px;color:#444;transform:scaleX(0.9659)">Select</span>
<span class="t" style="left:16.24px;top:265.48px;font-size:19.27px;color:#222;transform:scaleX(0.9611)">B1</span>
<span class="t" style="left:391.40px;top:265.20px;font-size:19.13px;color:#222;transform:scaleX(1.0121)">Gadgets</span>
<span class="t" style="left:133.66px;top:315.39px;font-size:32.26px;color:#000;transform:scaleX(0.9400)">A</span>
<span class="t" style="left:305.66px;top:315.39px;font-size:32.26px;color:#000;transform:scaleX(0.9400)">B</span>
<span class="t" style="left:490.72px;top:315.39px;font-size:32.26px;color:#000;transform:scaleX(0.9400)">C</span>
<span class="t" style="left:671.22px;top:315.39px;font-size:32.26px;color:#000;transform:scaleX(0.9400)">D</span>
<span class="t" style="left:858.69px;top:315.39px;font-size:32.26px;color:#000;transform:scaleX(0.9400)">E</span>
<span class="t" style="left:1042.13px;top:315.39px;font-size:32.26px;color:#000;transform:scaleX(0.9400)">F</span>
<span class="t" style="left:1202.72px;top:315.39px;font-size:32.26px;color:#000;transform:scaleX(0.9400)">G</span>
<span class="t" style="left:1357.19px;top:315.39px;font-size:32.26px;color:#000;transform:scaleX(0.9400)">H</span>
<span class="t" style="left:1517.24px;top:315.39px;font-size:32.26px;color:#000;transform:scaleX(0.9400)">I</span>
<span class="t" style="left:26.40px;top:360.69px;font-size:30.73px;color:#000;transform:scaleX(0.9000)">1</span>
<span class="t" style="left:26.85px;top:406.69px;font-size:30.73px;color:#000;transform:scaleX(0.9000)">2</span>
<span class="t" style="left:26.85px;top:452.69px;font-size:30.73px;color:#000;transform:scaleX(0.9000)">3</span>
<span class="t" style="left:26.85px;top:498.69px;font-size:30.73px;color:#000;transform:scaleX(0.9000)">4</span>
<span class="t" style="left:26.85px;top:544.69px;font-size:30.73px;color:#000;transform:scaleX(0.9000)">5</span>
<span class="t" style="left:26.85px;top:590.69px;font-size:30.73px;color:#000;transform:scaleX(0.9000)">6</span>
<span class="t" style="left:26.85px;top:636.69px;font-size:30.73px;color:#000;transform:scaleX(0.9000)">7</span>
<span class="t" style="left:26.85px;top:682.69px;font-size:30.73px;color:#000;transform:scaleX(0.9000)">8</span>
<span class="t" style="left:26.85px;top:728.69px;font-size:30.73px;color:#000;transform:scaleX(0.9000)">9</span>
<span class="t" style="left:18.71px;top:774.69px;font-size:30.73px;color:#000;transform:scaleX(0.9000)">10</span>
<span class="t" style="left:19.74px;top:820.69px;font-size:30.73px;color:#000;transform:scaleX(0.9000)">11</span>
<span class="t" style="left:18.71px;top:866.69px;font-size:30.73px;color:#000;transform:scaleX(0.9000)">12</span>
<span class="t" style="left:18.71px;top:912.69px;font-size:30.73px;color:#000;transform:scaleX(0.9000)">13</span>
<span class="t" style="left:116.28px;top:360.74px;font-size:31.15px;color:#000;font-weight:700;transform:scaleX(1.0600)">S/N</span>
<span class="t" style="left:265.28px;top:364.40px;font-size:23.74px;color:#000;font-weight:700;transform:scaleX(1.0600)">Gadgets</span>
<span class="t" style="left:470.30px;top:364.40px;font-size:23.74px;color:#000;font-weight:700;transform:scaleX(1.0600)">Price</span>
<span class="t" style="left:631.06px;top:364.40px;font-size:23.74px;color:#000;font-weight:700;transform:scaleX(1.0600)">Quantity</span>
<span class="t" style="left:840.73px;top:364.40px;font-size:23.74px;color:#000;font-weight:700;transform:scaleX(1.0600)">Total</span>
<span class="t" style="left:135.93px;top:407.94px;font-size:29.61px;color:#000;font-weight:700;transform:scaleX(0.9500)">1</span>
<span class="t" style="left:277.86px;top:414.44px;font-size:21.93px;color:#000;transform:scaleX(1.1100)">Laptop</span>
<span class="t" style="left:460.80px;top:414.44px;font-size:21.93px;color:#000;transform:scaleX(1.0300)">270,000</span>
<span class="t" style="left:675.60px;top:414.44px;font-size:21.93px;color:#000;transform:scaleX(1.0300)">6</span>
<span class="t" style="left:824.58px;top:411.03px;font-size:21.23px;color:#000;transform:scaleX(1.0850)">1620000</span>
<span class="t" style="left:135.93px;top:453.94px;font-size:29.61px;color:#000;font-weight:700;transform:scaleX(0.9500)">2</span>
<span class="t" style="left:272.87px;top:460.44px;font-size:21.93px;color:#000;transform:scaleX(1.0360)">Speaker</span>
<span class="t" style="left:467.07px;top:460.44px;font-size:21.93px;color:#000;transform:scaleX(1.0300)">17,450</span>
<span class="t" style="left:675.60px;top:460.44px;font-size:21.93px;color:#000;transform:scaleX(1.0300)">9</span>
<span class="t" style="left:830.98px;top:457.03px;font-size:21.23px;color:#000;transform:scaleX(1.0850)">157050</span>
<span class="t" style="left:136.40px;top:499.94px;font-size:29.61px;color:#000;font-weight:700;transform:scaleX(0.9500)">3</span>
<span class="t" style="left:278.55px;top:506.44px;font-size:21.93px;color:#000;transform:scaleX(1.1100)">Mouse</span>
<span class="t" style="left:473.86px;top:506.44px;font-size:21.93px;color:#000;transform:scaleX(1.0300)">4,500</span>
<span class="t" style="left:669.33px;top:506.44px;font-size:21.93px;color:#000;transform:scaleX(1.0300)">12</span>
<span class="t" style="left:837.92px;top:503.03px;font-size:21.23px;color:#000;transform:scaleX(1.0850)">54000</span>
<span class="t" style="left:135.93px;top:545.94px;font-size:29.61px;color:#000;font-weight:700;transform:scaleX(0.9500)">4</span>
<span class="t" style="left:251.52px;top:552.44px;font-size:21.93px;color:#000;transform:scaleX(1.1100)">Microphone</span>
<span class="t" style="left:467.07px;top:552.44px;font-size:21.93px;color:#000;transform:scaleX(1.0300)">25,000</span>
<span class="t" style="left:675.60px;top:552.44px;font-size:21.93px;color:#000;transform:scaleX(1.0300)">9</span>
<span class="t" style="left:830.98px;top:549.03px;font-size:21.23px;color:#000;transform:scaleX(1.0850)">225000</span>
<span class="t" style="left:136.40px;top:591.94px;font-size:29.61px;color:#000;font-weight:700;transform:scaleX(0.9500)">5</span>
<span class="t" style="left:260.40px;top:598.44px;font-size:21.93px;color:#000;transform:scaleX(1.1100)">Iphone 13</span>
<span class="t" style="left:461.31px;top:598.44px;font-size:21.93px;color:#000;transform:scaleX(1.0300)">300,000</span>
<span class="t" style="left:675.60px;top:598.44px;font-size:21.93px;color:#000;transform:scaleX(1.0300)">6</span>
<span class="t" style="left:824.58px;top:595.03px;font-size:21.23px;color:#000;transform:scaleX(1.0850)">1800000</span>
<span class="t" style="left:135.93px;top:637.94px;font-size:29.61px;color:#000;font-weight:700;transform:scaleX(0.9500)">6</span>
<span class="t" style="left:281.01px;top:644.44px;font-size:21.93px;color:#000;transform:scaleX(1.1100)">Airpod</span>
<span class="t" style="left:467.07px;top:644.44px;font-size:21.93px;color:#000;transform:scaleX(1.0300)">15,000</span>
<span class="t" style="left:675.60px;top:644.44px;font-size:21.93px;color:#000;transform:scaleX(1.0300)">1</span>
<span class="t" style="left:837.38px;top:641.03px;font-size:21.23px;color:#000;transform:scaleX(1.0850)">15000</span>
<span class="t" style="left:135.93px;top:683.94px;font-size:29.61px;color:#000;font-weight:700;transform:scaleX(0.9500)">7</span>
<span class="t" style="left:272.18px;top:690.44px;font-size:21.93px;color:#000;transform:scaleX(1.0500)">Headset</span>
<span class="t" style="left:473.86px;top:690.44px;font-size:21.93px;color:#000;transform:scaleX(1.0300)">3,500</span>
<span class="t" style="left:676.12px;top:690.44px;font-size:21.93px;color:#000;transform:scaleX(1.0300)">4</span>
<span class="t" style="left:837.38px;top:687.03px;font-size:21.23px;color:#000;transform:scaleX(1.0850)">14000</span>
<span class="t" style="left:136.40px;top:729.94px;font-size:29.61px;color:#000;font-weight:700;transform:scaleX(0.9500)">8</span>
<span class="t" style="left:270.25px;top:736.44px;font-size:21.93px;color:#000;transform:scaleX(1.1300)">Moderm</span>
<span class="t" style="left:467.07px;top:736.44px;font-size:21.93px;color:#000;transform:scaleX(1.0300)">17,500</span>
<span class="t" style="left:675.60px;top:736.44px;font-size:21.93px;color:#000;transform:scaleX(1.0300)">6</span>
<span class="t" style="left:830.98px;top:733.03px;font-size:21.23px;color:#000;transform:scaleX(1.0850)">105000</span>
<span class="t" style="left:135.93px;top:775.94px;font-size:29.61px;color:#000;font-weight:700;transform:scaleX(0.9500)">9</span>
<span class="t" style="left:240.89px;top:782.44px;font-size:21.93px;color:#000;transform:scaleX(1.0670)">Tecno Spark 2</span>
<span class="t" style="left:467.59px;top:782.44px;font-size:21.93px;color:#000;transform:scaleX(1.0300)">35,000</span>
<span class="t" style="left:675.60px;top:782.44px;font-size:21.93px;color:#000;transform:scaleX(1.0300)">1</span>
<span class="t" style="left:837.92px;top:779.03px;font-size:21.23px;color:#000;transform:scaleX(1.0850)">35000</span>
<span class="t" style="left:1204.57px;top:544.71px;font-size:29.05px;color:#000;font-weight:700;transform:scaleX(1.0329)">File name</span>
<span class="t" style="left:131.87px;top:956.86px;font-size:18.72px;color:#1e7145;font-weight:700;transform:scaleX(1.0341)">Purchase Report</span>
<span class="t" style="left:11.83px;top:995.03px;font-size:15.08px;color:#444;transform:scaleX(0.9734)">Ready</span>
<span class="t" style="left:157.40px;top:995.70px;font-size:14.53px;color:#444;transform:scaleX(1.0587)">Accessibility: Good to go</span>
<span class="t" style="left:1499.38px;top:995.03px;font-size:15.08px;color:#444;transform:scaleX(1.0227)">160%</span>
<span class="t" style="left:165.83px;top:169.93px;font-size:19.69px;color:#222;font-weight:700;transform:scaleX(0.8692)">B</span>
<span class="t" style="left:201.84px;top:169.93px;font-size:19.69px;color:#333;font-family:'Liberation Serif', serif;font-style:italic;transform:scaleX(1.1444)">I</span>
<span class="t" style="left:231.38px;top:169.98px;font-size:19.27px;color:#333;transform:scaleX(1.1250)">U</span>
<div style="left:232px;top:188.5px;width:14px;height:1.6px;background:#333"></div>
<span class="t" style="left:755.70px;top:143.72px;font-size:25.14px;color:#333;transform:scaleX(0.7929)">$</span>
<span class="t" style="left:805.61px;top:142.62px;font-size:29.75px;color:#333;transform:scaleX(0.8920)">%</span>
<svg style="left:0;top:0" width="1569" height="1020" viewBox="0 0 1569 1020"><path d="M853.2 148.8 A4.8 4.8 0 0 1 858.4 154.5 C858 160 854.5 164.5 848.3 166.8 L847.6 165.6 C851 163.6 852.6 161.3 853 158.8 A4.9 4.9 0 0 1 853.2 148.8 Z" fill="#333"/></svg>
<svg style="left:0;top:0" width="1569" height="1020" viewBox="0 0 1569 1020"><path d="M1199.5 544.2 L538 64" stroke="#000" stroke-width="5.2" fill="none"/><path d="M522 52 L549.8 60.2 L542 65 L538.1 75.7 Z" fill="#000"/></svg>
</body></html>
